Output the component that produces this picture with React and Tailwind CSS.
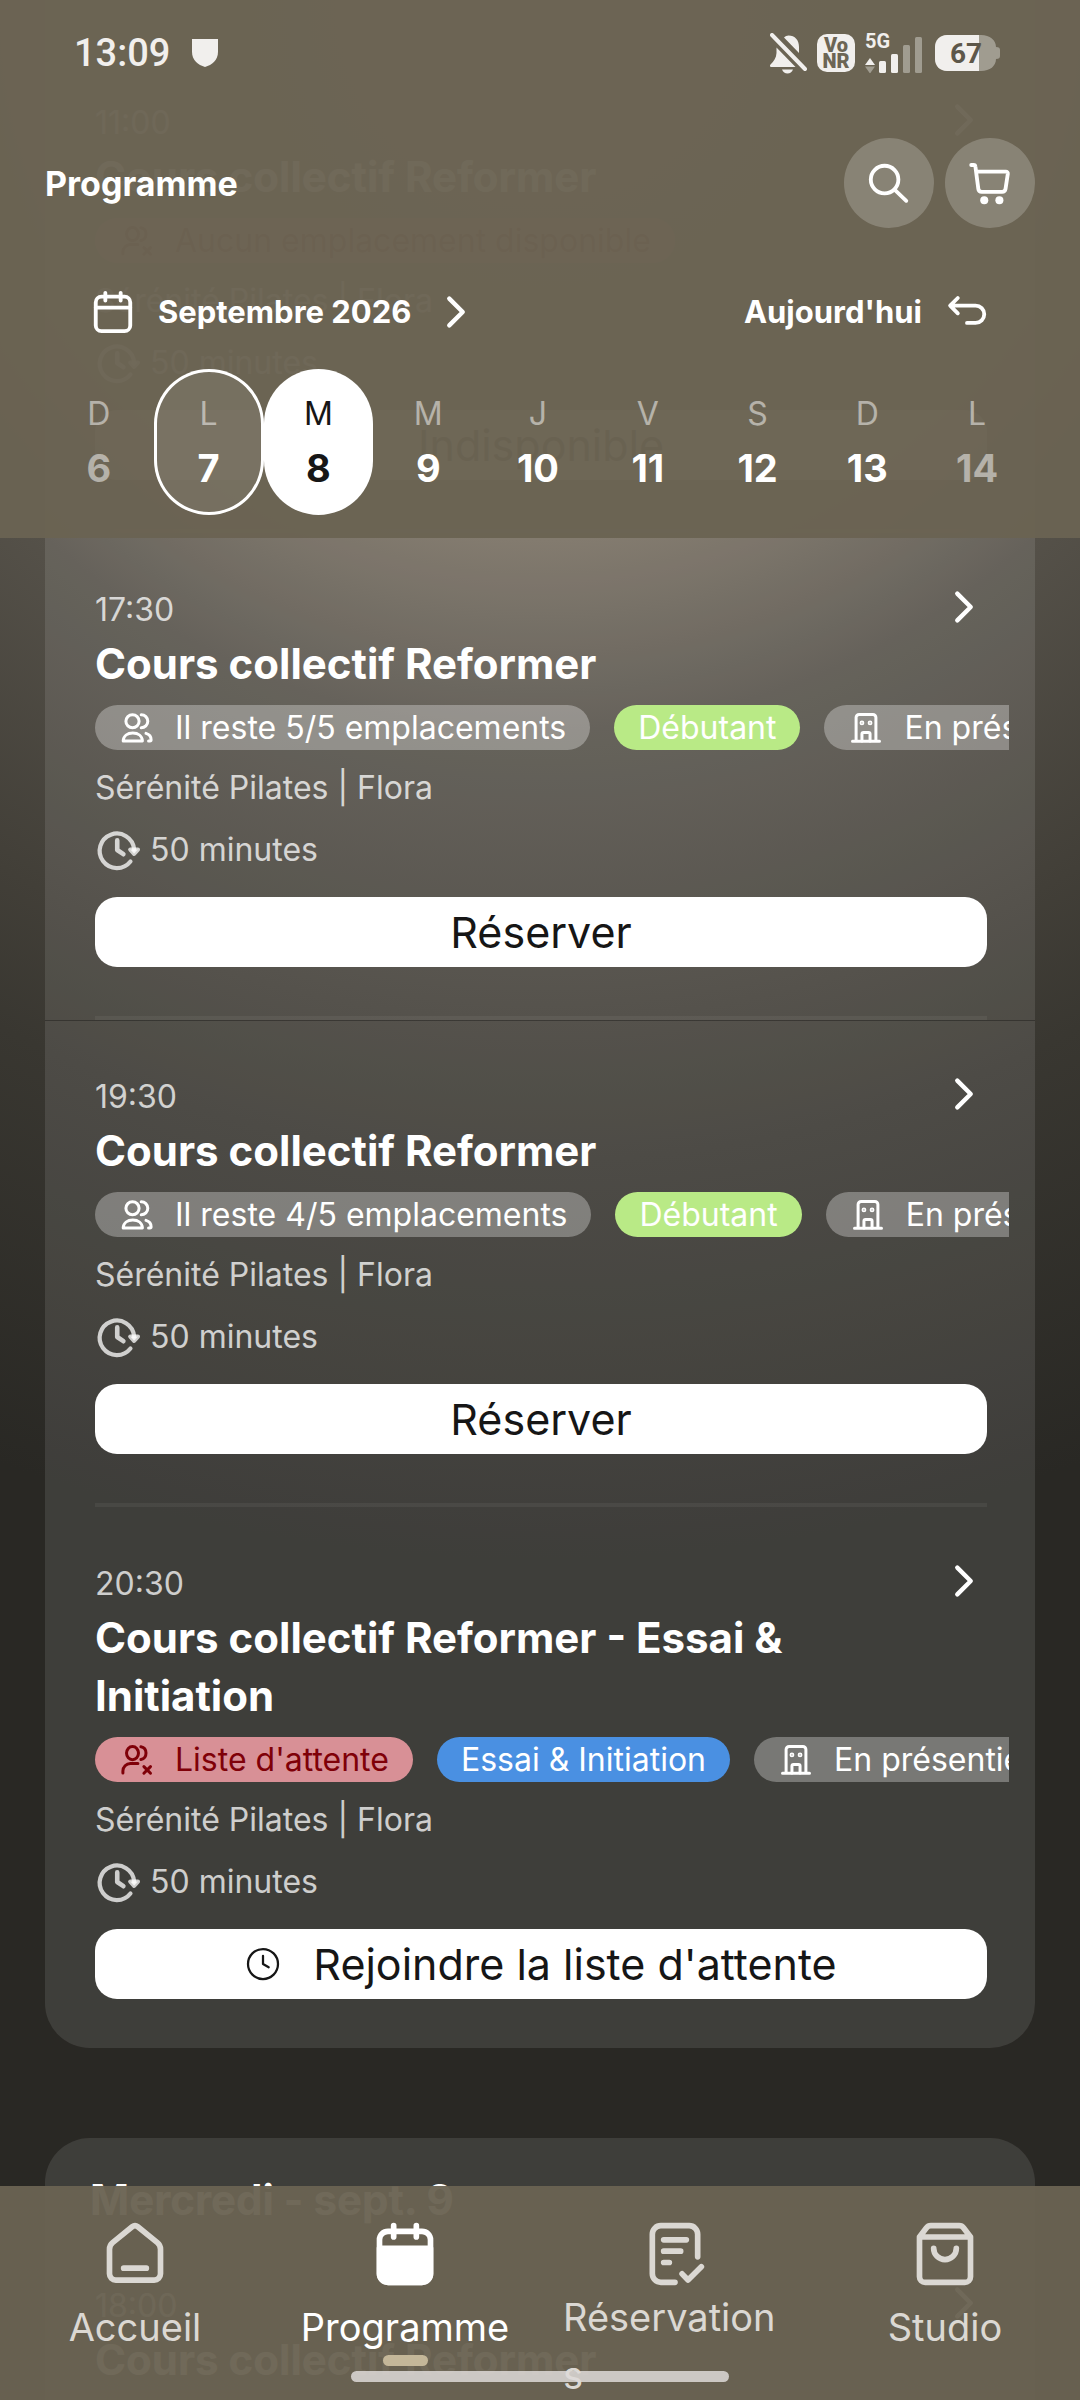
import { useState } from "react";

const sessions = [
  {
    time: "11:00",
    title: "Cours collectif Reformer",
    tags: [
      { label: "Aucun emplacement disponible", icon: "full", tone: "red" },
    ],
    action: "Indisponible",
    disabled: true,
  },
  {
    time: "17:30",
    title: "Cours collectif Reformer",
    tags: [
      { label: "Il reste 5/5 emplacements", icon: "users", tone: "gray" },
      { label: "Débutant", tone: "green" },
      { label: "En présentiel", icon: "building", tone: "gray" },
    ],
    action: "Réserver",
    seam: true,
  },
  {
    time: "19:30",
    title: "Cours collectif Reformer",
    tags: [
      { label: "Il reste 4/5 emplacements", icon: "users", tone: "gray" },
      { label: "Débutant", tone: "green" },
      { label: "En présentiel", icon: "building", tone: "gray" },
    ],
    action: "Réserver",
  },
  {
    time: "20:30",
    title: "Cours collectif Reformer - Essai & Initiation",
    tags: [
      { label: "Liste d'attente", icon: "full", tone: "red" },
      { label: "Essai & Initiation", tone: "blue" },
      { label: "En présentiel", icon: "building", tone: "gray" },
    ],
    action: "Rejoindre la liste d'attente",
    waitlist: true,
  },
];

const nextSession = {
  time: "18:00",
  title: "Cours collectif Reformer",
  tags: [],
  action: "Réserver",
};

const days = [
  { letter: "D", date: 6, muted: true },
  { letter: "L", date: 7, today: true },
  { letter: "M", date: 8 },
  { letter: "M", date: 9 },
  { letter: "J", date: 10 },
  { letter: "V", date: 11 },
  { letter: "S", date: 12 },
  { letter: "D", date: 13 },
  { letter: "L", date: 14, muted: true },
];

const tones = {
  gray: "bg-white/30 text-white",
  green: "bg-[#b9ea86] text-white",
  blue: "bg-[#4a90e2] text-white",
  red: "bg-[#d89096] text-[#7f0008]",
};

function Icon({ className, strokeWidth = 2, children }) {
  return (
    <svg
      viewBox="0 0 24 24"
      className={className}
      fill="none"
      stroke="currentColor"
      strokeWidth={strokeWidth}
      strokeLinecap="round"
      strokeLinejoin="round"
      aria-hidden="true"
    >
      {children}
    </svg>
  );
}

function ChevronIcon() {
  return (
    <Icon className="size-[46px] shrink-0" strokeWidth={2.3}>
      <path d="M8.5 5l7 7-7 7" />
    </Icon>
  );
}

const tagIcons = {
  users: (
    <>
      <circle cx="9" cy="7.5" r="4.4" />
      <path d="M2.8 20.6c.2-3.2 2.8-5.2 6.4-5.2s6.2 2 6.4 5.2z" />
      <path d="M14.8 3.1a4.4 4.4 0 0 1 0 8.8M18 15.6c2.1.6 3.4 2.3 3.4 4.2 0 .5-.3.8-.8.8h-.9" />
    </>
  ),
  full: (
    <>
      <ellipse cx="9" cy="7.4" rx="4" ry="4.4" />
      <path d="M2.6 20.6v-1.2a5 5 0 0 1 5-5h5" />
      <path d="M14.6 3.1c2.2.4 3.4 2.2 3.4 4.3s-1.2 3.9-3.4 4.3M16.6 16.4l4.4 4.4M21 16.4l-4.4 4.4" />
    </>
  ),
  building: (
    <>
      <path d="M5.4 20.6V5a2 2 0 0 1 2-2h9.2a2 2 0 0 1 2 2v15.6M3 20.9h18" />
      <path d="M9.3 20.6V16a1 1 0 0 1 1-1h3.4a1 1 0 0 1 1 1v4.6" />
      <circle cx="9.3" cy="8.6" r="0.6" />
      <circle cx="14.7" cy="8.6" r="0.6" />
    </>
  ),
};

function Tag({ label, icon, tone }) {
  return (
    <li
      className={`flex h-[45px] shrink-0 items-center gap-5 rounded-full px-6 text-[32px] whitespace-nowrap ${tones[tone]}`}
    >
      {icon && <Icon className="size-9">{tagIcons[icon]}</Icon>}
      {label}
    </li>
  );
}

function Session({ session, last }) {
  return (
    <article
      className={`pr-12 pl-[50px] ${session.seam ? "shadow-[0_1px_0_rgba(0,0,0,0.3)]" : ""}`}
    >
      <div className="pt-[57px] pb-[49px]">
        <div className="flex h-10 items-end justify-between">
          <time className="text-[32px] leading-10 text-white/75">
            {session.time}
          </time>
          <button type="button" aria-label="Voir le cours">
            <ChevronIcon />
          </button>
        </div>
        <h3 className="mt-[5px] pr-24 text-[42px] leading-[58px] font-bold">
          {session.title}
        </h3>
        <ul
          className={`mt-3 -mr-[22px] flex h-[45px] gap-6 overflow-hidden ${session.disabled ? "opacity-60" : ""}`}
        >
          {session.tags.map((tag) => (
            <Tag key={tag.label} {...tag} />
          ))}
        </ul>
        <p className="mt-[18px] text-[32px] leading-10 text-white/75">
          Sérénité Pilates | Flora
        </p>
        <p className="mt-[22px] flex h-10 items-center gap-[9px] text-[32px] text-white/75">
          <Icon className="size-[46px]" strokeWidth={2.2}>
            <path d="M18.500 18a9 9 0 1 1 1.900-6.400" />
            <path d="M18.400 11.800h4l-2 2.200z" fill="currentColor" />
            <path d="M11.600 7v5l3.200 2.200" strokeWidth="2.400" />
          </Icon>
          50 minutes
        </p>
        <button
          type="button"
          disabled={session.disabled}
          className="mt-[27px] flex h-[70px] w-full items-center justify-center gap-8 rounded-[22px] bg-white text-[43px] text-[#161616] disabled:opacity-50"
        >
          {session.waitlist && (
            <Icon className="size-9" strokeWidth={1.5}>
              <circle cx="12" cy="12" r="10" />
              <path d="M12 6.5V12l3.8 2.2" />
            </Icon>
          )}
          {session.action}
        </button>
      </div>
      {!last && <div className="h-1 bg-white/5" />}
    </article>
  );
}

function StatusBar() {
  return (
    <div className="flex h-[106px] items-center pr-20 pl-[74px] font-[Roboto,sans-serif] text-[#f1efed]">
      <span className="text-[38px] font-medium">13:09</span>
      <svg viewBox="0 0 26 28" className="ml-[22px] h-7 w-[26px]" fill="currentColor">
        <path d="M0 0h26v13c0 8-6 13-13 15C6 26 0 21 0 13z" />
      </svg>
      <svg viewBox="0 0 37 41" className="ml-auto h-[41px] w-[37px]">
        <path
          d="M18.500 2.500C25 2.500 29 7 29 14v6L14 4.500c1.200-1.200 3-2 4.500-2zM6.500 14.500L25.500 34H1.500c-1.500 0-2-1.500-1-2.600C4 28 6.200 25 6.500 20zM12 36.500h11c-1 2.500-3 4-5.500 4s-4.500-1.500-5.500-4z"
          fill="currentColor"
        />
        <path d="M2 2l33 34" stroke="currentColor" strokeWidth="4" strokeLinecap="round" />
      </svg>
      <span className="ml-2.5 flex h-[38px] w-[38px] flex-col items-center justify-center rounded-[10px] bg-[#f1efed] text-[20px] leading-4 font-black text-[#6c6555]">
        <span>Vo</span>
        <span>NR</span>
      </span>
      <svg viewBox="0 0 58 40" className="ml-2.5 h-10 w-[58px]" fill="currentColor">
        <text x="0" y="15" fontSize="20" fontWeight="700">
          5G
        </text>
        <path d="M5 25l5 7H0z" />
        <path d="M0 33.500h10l-5 7z" opacity="0.4" />
        <rect x="14" y="28" width="7" height="12" rx="1.500" />
        <rect x="26" y="21" width="7" height="19" rx="1.500" />
        <rect x="38" y="12" width="7" height="28" rx="1.500" opacity="0.4" />
        <rect x="50" y="4" width="7" height="36" rx="1.500" opacity="0.4" />
      </svg>
      <svg viewBox="0 0 65 36" className="ml-3 h-9 w-[65px]">
        <path
          d="M12 0h34c9 0 15 5 15 12 3 0 4 1 4 3v6c0 2-1 3-4 3 0 7-6 12-15 12H12C5 36 0 31 0 24V12C0 5 5 0 12 0z"
          fill="currentColor"
          opacity="0.4"
        />
        <path d="M12 0h32v36H12C5 36 0 31 0 24V12C0 5 5 0 12 0z" fill="currentColor" />
        <text x="31" y="28" fontSize="28" fontWeight="700" fill="#5d574a" textAnchor="middle">
          67
        </text>
      </svg>
    </div>
  );
}

function Header() {
  const [selected, setSelected] = useState(8);

  return (
    <header className="absolute inset-x-0 top-0 bg-[#6a6352]/96 pb-[23px]">
      <StatusBar />
      <div className="mt-8 flex h-[90px] items-center gap-[11px] px-[45px]">
        <h1 className="mr-auto text-[34px] font-bold">Programme</h1>
        <button
          type="button"
          aria-label="Rechercher"
          className="flex size-[90px] items-center justify-center rounded-full bg-white/20"
        >
          <Icon className="size-[46px]">
            <circle cx="9.700" cy="10.200" r="7.200" />
            <path d="M14.900 15.500L21 21.300" />
          </Icon>
        </button>
        <button
          type="button"
          aria-label="Panier"
          className="flex size-[90px] items-center justify-center rounded-full bg-white/20"
        >
          <Icon className="size-[46px]">
            <path d="M2.200 2.600h1.200a1 1 0 0 1 1 .9L5.900 15a1.800 1.800 0 0 0 1.800 1.600h10.600a1.800 1.800 0 0 0 1.800-1.500L21.300 7.200a1 1 0 0 0-1-1.100H4.800" />
            <circle cx="9" cy="21" r="2.100" fill="currentColor" stroke="none" />
            <circle cx="16.900" cy="21" r="2.100" fill="currentColor" stroke="none" />
          </Icon>
        </button>
      </div>

      <div className="mt-[60px] flex h-12 items-center justify-between px-[90px] text-[31px] font-bold">
        <button type="button" className="flex items-center gap-[22px]">
          <Icon className="size-[46px]">
            <rect x="3" y="4" width="18" height="18" rx="3" />
            <path d="M3 9.700h18M8 2v4M16 2v4" />
          </Icon>
          Septembre 2026
          <ChevronIcon />
        </button>
        <button type="button" className="flex items-center gap-[22px]">
          Aujourd'hui
          <Icon className="size-[46px]">
            <path d="M7.200 4.700l-4 4 4 4M3.500 8.700h13a4.500 4.500 0 0 1 0 9h-4.500" />
          </Icon>
        </button>
      </div>

      <div className="mt-[33px] grid grid-cols-9 pr-12 pl-11">
        {days.map((day) => {
          const active = day.date === selected;
          return (
            <button
              key={day.date}
              type="button"
              onClick={() => setSelected(day.date)}
              className={`flex h-[146px] flex-col items-center rounded-full pt-[25px] ${
                active ? "bg-white text-[#161616]" : ""
              } ${day.today ? "bg-white/8 inset-ring-3 inset-ring-white" : ""}`}
            >
              <span
                className={`text-[32px] leading-10 ${active ? "" : "text-white/50"}`}
              >
                {day.letter}
              </span>
              <span
                className={`mt-2.5 text-[38px] leading-[48px] font-bold ${day.muted ? "text-white/50" : ""}`}
              >
                {day.date}
              </span>
            </button>
          );
        })}
      </div>
    </header>
  );
}

function NavItem({ label, icon, active }) {
  return (
    <a
      href="#"
      className={`flex flex-col items-center pt-[34px] ${active ? "text-white" : "text-[#dbd8d3]"}`}
    >
      <Icon className="size-[68px] shrink-0">{icon}</Icon>
      {label}
      {active && (
        <span className="h-[11px] w-[45px] shrink-0 rounded-full bg-[#c4b799]" />
      )}
    </a>
  );
}

function BottomNav() {
  return (
    <footer className="absolute inset-x-0 bottom-0 h-[214px] overflow-hidden bg-[#6a6352]/96">
      <nav className="grid grid-cols-4 text-[38px]">
        <NavItem
          label={<span className="mt-[11px] leading-[56px]">Accueil</span>}
          icon={
            <path d="M3 10.300A3 3 0 0 1 4.100 8L11 2.400a1.600 1.600 0 0 1 2 0L19.900 8a3 3 0 0 1 1.100 2.300V19a2.200 2.200 0 0 1-2.200 2.200H5.200A2.200 2.200 0 0 1 3 19zM8 17h8" />
          }
        />
        <NavItem
          active
          label={<span className="mt-[11px] leading-[56px]">Programme</span>}
          icon={
            <>
              <rect x="3" y="4" width="18" height="18" rx="3" />
              <path d="M3 10h18v9a3 3 0 0 1-3 3H6a3 3 0 0 1-3-3z" fill="currentColor" />
              <path d="M8 2v4M16 2v4" />
            </>
          }
        />
        <NavItem
          label={
            <span className="w-[224px] leading-[58px] break-all">
              Réservations
            </span>
          }
          icon={
            <path d="M20 13V5a3 3 0 0 0-3-3H7a3 3 0 0 0-3 3v14a3 3 0 0 0 3 3h5M8 7h8M8 11h6M8 15h2M14.500 19l2.100 2.200 4.700-4.700" />
          }
        />
        <NavItem
          label={<span className="mt-[11px] leading-[56px]">Studio</span>}
          icon={
            <path d="M3 6l2.400-3.200A2 2 0 0 1 7 2h10a2 2 0 0 1 1.600.8L21 6v14a2 2 0 0 1-2 2H5a2 2 0 0 1-2-2zM3 6h18M16 10a4 4 0 0 1-8 0" />
          }
        />
      </nav>
      {/* system gesture bar */}
      <div className="absolute bottom-[18px] left-1/2 h-[11px] w-[35%] -translate-x-1/2 rounded-full bg-[#dedbd8]/85" />
    </footer>
  );
}

export default function App() {
  return (
    <div className="relative h-screen overflow-hidden bg-[#292824] font-[Inter,sans-serif] text-white">
      <main className="h-full overflow-hidden bg-[radial-gradient(circle_at_50%_0,#857b6c_0,#756c5f_540px,#555149_730px,#423f38_1020px,#393731_1160px,#292824_1560px)] px-[45px]">
        <section className="rounded-b-[45px] bg-white/10 pt-[46px]">
          {sessions.map((session, i) => (
            <Session
              key={session.time}
              session={session}
              last={i === sessions.length - 1}
            />
          ))}
        </section>
        <section className="mt-[90px] rounded-t-[45px] bg-white/10 pt-[33px]">
          <h2 className="px-[45px] text-[42px] leading-[58px] font-bold">
            Mercredi - sept. 9
          </h2>
          <Session session={nextSession} last />
        </section>
      </main>
      <Header />
      <BottomNav />
    </div>
  );
}
